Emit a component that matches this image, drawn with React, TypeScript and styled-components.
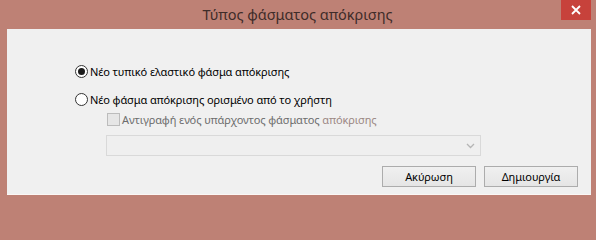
import React from "react";
import styled, { createGlobalStyle } from "styled-components";

const GlobalStyle = createGlobalStyle`
  html, body {
    margin: 0;
    padding: 0;
    background: #be8175;
  }
  * {
    box-sizing: border-box;
  }
`;

const Window = styled.div`
  width: 596px;
  height: 202px;
  display: flex;
  flex-direction: column;
  background: #be8175;
  font-family: "Noto Sans", "Open Sans", sans-serif;
`;

const TitleBar = styled.div`
  height: 29px;
  display: grid;
  grid-template-columns: 1fr auto 1fr;
  align-items: start;
  padding-right: 5px;
`;

const Title = styled.div`
  grid-column: 2;
  font-size: 14.5px;
  line-height: 29px;
  color: #3e2c29;
  padding-left: 4px;
`;

const CloseButton = styled.div`
  grid-column: 3;
  justify-self: end;
  width: 30px;
  height: 20px;
  background: #c7423b;
  display: flex;
  align-items: center;
  justify-content: center;
`;

const Body = styled.div`
  flex: 1;
  margin: 0 5px 7px 7px;
  background: #f0f0f0;
  border-bottom: 1px solid #fbf7f5;
  display: flex;
  flex-direction: column;
  padding: 36px 13px 0 68px;
  font-size: 11px;
  letter-spacing: -0.1px;
  color: #000;
`;

const Options = styled.div`
  display: flex;
  flex-direction: column;
`;

const OptionRow = styled.label<{ $indent?: number; $gap?: number }>`
  display: flex;
  align-items: center;
  gap: 2px;
  height: 13px;
  margin-left: ${(p) => p.$indent ?? 0}px;
  margin-bottom: ${(p) => p.$gap ?? 0}px;
  white-space: nowrap;
`;

const Radio = styled.span<{ $checked?: boolean }>`
  width: 13px;
  height: 13px;
  border-radius: 50%;
  border: 1px solid #333;
  background: #fff;
  display: flex;
  align-items: center;
  justify-content: center;
  &::after {
    content: "";
    display: ${(p) => (p.$checked ? "block" : "none")};
    width: 7px;
    height: 7px;
    border-radius: 50%;
    background: #1b1b1b;
  }
`;

const Checkbox = styled.span`
  width: 13px;
  height: 13px;
  border: 1px solid #bcbcbc;
  background: #e6e6e6;
`;

const Label = styled.span<{ $disabled?: boolean }>`
  color: ${(p) => (p.$disabled ? "#6d6d6d" : "#000")};
  line-height: 13px;
`;

const Faded = styled.span`
  color: #9c8884;
`;

const Select = styled.div`
  margin-left: 31px;
  margin-top: 9px;
  width: 375px;
  height: 21px;
  border: 1px solid #d9d9d9;
  background: #efefef;
  display: flex;
  align-items: center;
  justify-content: flex-end;
  padding-right: 5px;
`;

const Footer = styled.div`
  display: flex;
  justify-content: flex-end;
  gap: 8px;
  margin-top: 10px;
`;

const Button = styled.button`
  width: 94px;
  height: 21px;
  border: 1px solid #acacac;
  background: linear-gradient(#f0f0f0, #e5e5e5);
  font-family: inherit;
  font-size: 11px;
  letter-spacing: -0.1px;
  color: #000;
  padding: 0;
  line-height: 19px;
`;

export default function App() {
  return (
    <>
      <GlobalStyle />
      <Window>
        <TitleBar>
          <Title>Τύπος φάσματος απόκρισης</Title>
          <CloseButton>
            <svg width="10" height="10" viewBox="0 0 10 10">
              <path d="M1 1 L9 9 M9 1 L1 9" stroke="#fff" strokeWidth="1.8" />
            </svg>
          </CloseButton>
        </TitleBar>
        <Body>
          <Options>
            <OptionRow $gap={15}>
              <Radio $checked />
              <Label>Νέο τυπικό ελαστικό φάσμα απόκρισης</Label>
            </OptionRow>
            <OptionRow $gap={7}>
              <Radio />
              <Label>Νέο φάσμα απόκρισης ορισμένο από το χρήστη</Label>
            </OptionRow>
            <OptionRow $indent={32}>
              <Checkbox />
              <Label $disabled>
                Αντιγραφή ενός υπάρχοντος φάσματος <Faded>απόκρισης</Faded>
              </Label>
            </OptionRow>
            <Select>
              <svg width="9" height="6" viewBox="0 0 9 6">
                <path d="M1 1 L4.5 4.5 L8 1" stroke="#b5b5b5" strokeWidth="1.3" fill="none" />
              </svg>
            </Select>
          </Options>
          <Footer>
            <Button>Ακύρωση</Button>
            <Button>Δημιουργία</Button>
          </Footer>
        </Body>
      </Window>
    </>
  );
}
